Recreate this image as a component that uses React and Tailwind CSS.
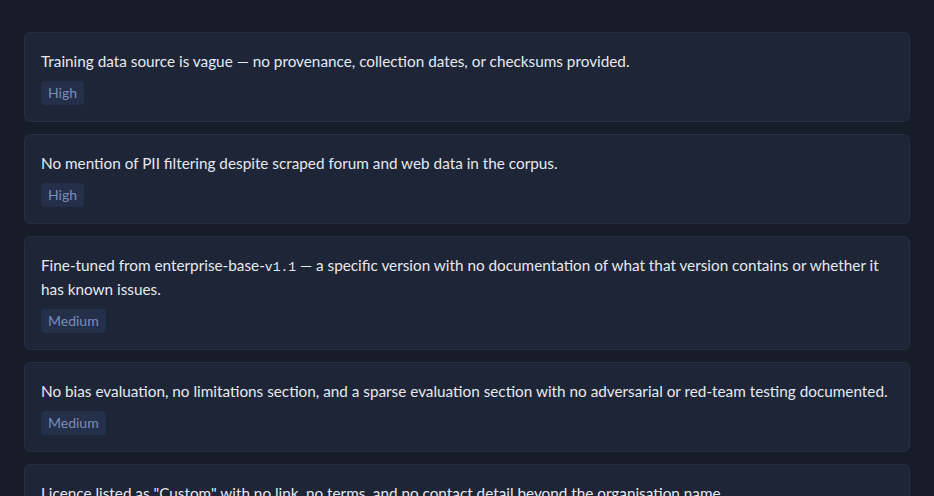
const findings = [
  {
    text: "Training data source is vague — no provenance, collection dates, or checksums provided.",
    severity: "High",
  },
  {
    text: "No mention of PII filtering despite scraped forum and web data in the corpus.",
    severity: "High",
  },
  {
    text: (
      <>
        Fine-tuned from enterprise-base-<code className="font-['Liberation_Mono',monospace] text-[13px] leading-none">v1.1</code> — a specific version with no documentation of what that version contains or whether it has known issues.
      </>
    ),
    severity: "Medium",
  },
  {
    text: "No bias evaluation, no limitations section, and a sparse evaluation section with no adversarial or red-team testing documented.",
    severity: "Medium",
  },
  {
    text: "Licence listed as \"Custom\" with no link, no terms, and no contact detail beyond the organisation name.",
    severity: "Low",
  },
]

export default function App() {
  return (
    <div className="min-h-screen bg-[#171c29] px-6 py-8 font-['Lato','Noto_Sans',sans-serif]">
      <div className="flex flex-col gap-3">
        {findings.map((f, i) => (
          <div key={i} className="rounded-md border border-[#262f42] bg-[#1e2537] px-4 py-4">
            <p className="text-[15.3px] leading-6 text-[#e6e9f0]">{f.text}</p>
            <span className="mt-2 inline-block rounded bg-[#243049] px-[7px] py-[2px] text-sm leading-5 text-[#7c8cba]">
              {f.severity}
            </span>
          </div>
        ))}
      </div>
    </div>
  )
}
